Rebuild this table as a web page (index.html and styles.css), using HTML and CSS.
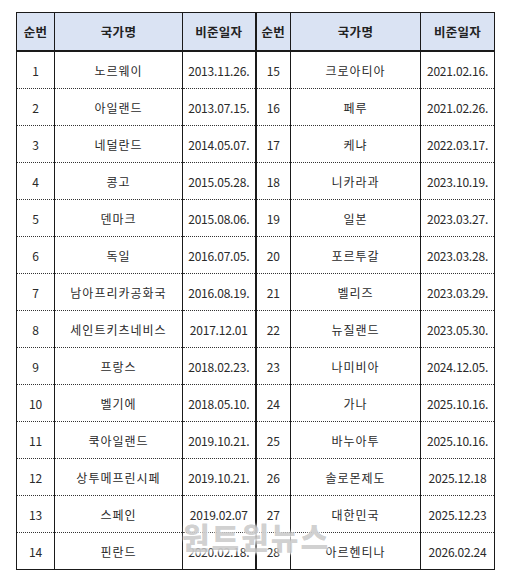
FILE: index.html
```html
<!DOCTYPE html>
<html lang="ko">
<head>
<meta charset="utf-8">
<link rel="stylesheet" href="styles.css">
</head>
<body>
<div class="page">
<table class="ratify">
<colgroup>
<col class="c-no"><col class="c-name"><col class="c-date">
<col class="c-no2"><col class="c-name2"><col class="c-date2">
</colgroup>
<thead>
<tr><th>순번</th><th>국가명</th><th class="mid">비준일자</th><th>순번</th><th>국가명</th><th>비준일자</th></tr>
</thead>
<tbody>
<tr><td>1</td><td>노르웨이</td><td class="mid">2013.11.26.</td><td>15</td><td>크로아티아</td><td>2021.02.16.</td></tr>
<tr><td>2</td><td>아일랜드</td><td class="mid">2013.07.15.</td><td>16</td><td>페루</td><td>2021.02.26.</td></tr>
<tr><td>3</td><td>네덜란드</td><td class="mid">2014.05.07.</td><td>17</td><td>케냐</td><td>2022.03.17.</td></tr>
<tr><td>4</td><td>콩고</td><td class="mid">2015.05.28.</td><td>18</td><td>니카라과</td><td>2023.10.19.</td></tr>
<tr><td>5</td><td>덴마크</td><td class="mid">2015.08.06.</td><td>19</td><td>일본</td><td>2023.03.27.</td></tr>
<tr><td>6</td><td>독일</td><td class="mid">2016.07.05.</td><td>20</td><td>포르투갈</td><td>2023.03.28.</td></tr>
<tr><td>7</td><td>남아프리카공화국</td><td class="mid">2016.08.19.</td><td>21</td><td>벨리즈</td><td>2023.03.29.</td></tr>
<tr><td>8</td><td>세인트키츠네비스</td><td class="mid">2017.12.01</td><td>22</td><td>뉴질랜드</td><td>2023.05.30.</td></tr>
<tr><td>9</td><td>프랑스</td><td class="mid">2018.02.23.</td><td>23</td><td>나미비아</td><td>2024.12.05.</td></tr>
<tr><td>10</td><td>벨기에</td><td class="mid">2018.05.10.</td><td>24</td><td>가나</td><td>2025.10.16.</td></tr>
<tr><td>11</td><td>쿡아일랜드</td><td class="mid">2019.10.21.</td><td>25</td><td>바누아투</td><td>2025.10.16.</td></tr>
<tr><td>12</td><td>상투메프린시페</td><td class="mid">2019.10.21.</td><td>26</td><td>솔로몬제도</td><td>2025.12.18</td></tr>
<tr><td>13</td><td>스페인</td><td class="mid">2019.02.07</td><td>27</td><td>대한민국</td><td>2025.12.23</td></tr>
<tr><td>14</td><td>핀란드</td><td class="mid">2020.02.18.</td><td>28</td><td>아르헨티나</td><td>2026.02.24</td></tr>
</tbody>
</table>
<div class="watermark">원트원뉴스</div>
</div>
</body>
</html>
```
FILE: styles.css
```css
html, body {
  margin: 0;
  padding: 0;
  background: #ffffff;
}
.page {
  position: relative;
  width: 513px;
  height: 580px;
  padding: 12px 0 0 16px;
  box-sizing: border-box;
}
.ratify {
  border-collapse: collapse;
  table-layout: fixed;
  width: 478px;
  font-family: "Noto Sans CJK KR", "Noto Sans", sans-serif;
  font-size: 12px;
  color: #1e1e1e;
  border: 1px solid #1a1a1a;
}
.c-no { width: 38px; }
.c-name { width: 128px; }
.c-date { width: 73px; }
.c-no2 { width: 35px; }
.c-name2 { width: 130px; }
.c-date2 { width: 74px; }
.ratify th, .ratify td {
  text-align: center;
  padding: 0;
  border-left: 1px solid #1a1a1a;
  white-space: nowrap;
  overflow: hidden;
}
.ratify th {
  height: 37px;
  background: #dae3f3;
  font-weight: 700;
  font-size: 12.5px;
  color: #222;
  border-bottom: 2px solid #1a1a1a;
  letter-spacing: 0.3px;
}
.ratify td {
  height: 36px;
  border-bottom: 1px dotted #333;
  letter-spacing: -0.2px;
  color: #2a2a2a;
}
.ratify td:nth-child(2), .ratify td:nth-child(5) {
  letter-spacing: 1px;
}
.ratify tbody tr:last-child td {
  border-bottom: 1px solid #1a1a1a;
}
.ratify .mid {
  border-right: 2px solid #1a1a1a;
}
.watermark {
  position: absolute;
  left: 182px;
  top: 514px;
  font-family: "Noto Sans CJK KR", sans-serif;
  font-weight: 900;
  font-size: 30px;
  letter-spacing: 2px;
  color: rgba(150, 150, 150, 0.45);
  text-shadow: 0 0 4px rgba(255,255,255,0.95), 1px 1px 3px rgba(255,255,255,0.85);
}
```
